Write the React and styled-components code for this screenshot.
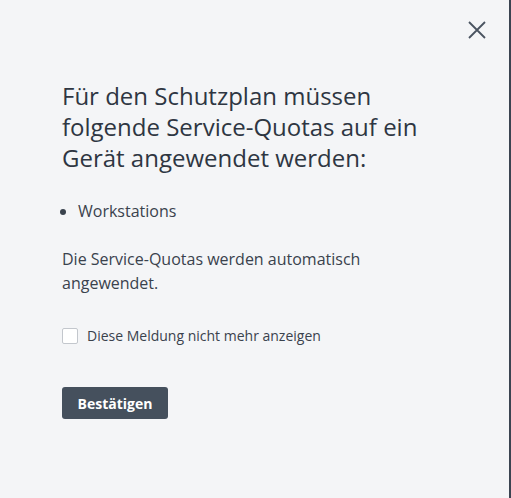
import React from "react";
import styled, { createGlobalStyle } from "styled-components";

const Global = createGlobalStyle`
  html, body { margin: 0; padding: 0; }
  body { background: #f4f5f7; font-family: "Open Sans", "Noto Sans", sans-serif; }
`;

const Page = styled.div`
  width: 511px;
  height: 498px;
  box-sizing: border-box;
  background: #f4f5f7;
  border-right: 2px solid #3b4451;
  position: relative;
`;

const Close = styled.button`
  position: absolute;
  top: 20px;
  right: 22px;
  width: 20px;
  height: 20px;
  padding: 0;
  border: 0;
  background: none;
  display: flex;
  align-items: center;
  justify-content: center;
`;

const Content = styled.div`
  padding: 80px 40px 0 62px;
  display: flex;
  flex-direction: column;
  color: #2e3642;
`;

const Title = styled.h1`
  margin: 0;
  font-size: 24px;
  font-weight: 400;
  line-height: 31px;
  color: #2e3642;
  max-width: 380px;
`;

const List = styled.ul`
  margin: 26px 0 0 0;
  padding: 0 0 0 16px;
  font-size: 16px;
  line-height: 24px;
  color: #3a424d;
  li::marker { font-size: 16px; }
`;

const Para = styled.p`
  margin: 24px 0 0 0;
  font-size: 16px;
  line-height: 24px;
  color: #3a424d;
  max-width: 330px;
`;

const CheckRow = styled.label`
  margin-top: 31px;
  display: flex;
  align-items: center;
  gap: 9px;
  font-size: 14px;
  color: #3a424d;
`;

const Box = styled.span`
  width: 14px;
  height: 14px;
  border: 1px solid #c3c7cd;
  border-radius: 2px;
  background: #fff;
`;

const Button = styled.button`
  margin-top: 42px;
  align-self: flex-start;
  width: 106px;
  height: 32px;
  border: 0;
  border-radius: 3px;
  background: #45505d;
  color: #fff;
  font-family: "Open Sans", sans-serif;
  font-weight: 700;
  font-size: 14px;
`;

export default function App() {
  return (
    <Page>
      <Global />
      <Close aria-label="close">
        <svg width="18" height="18" viewBox="0 0 18 18">
          <path d="M1 1 L17 17 M17 1 L1 17" stroke="#4a5360" strokeWidth="1.8" />
        </svg>
      </Close>
      <Content>
        <Title>Für den Schutzplan müssen folgende Service-Quotas auf ein Gerät angewendet werden:</Title>
        <List>
          <li>Workstations</li>
        </List>
        <Para>Die Service-Quotas werden automatisch angewendet.</Para>
        <CheckRow>
          <Box />
          Diese Meldung nicht mehr anzeigen
        </CheckRow>
        <Button>Bestätigen</Button>
      </Content>
    </Page>
  );
}
